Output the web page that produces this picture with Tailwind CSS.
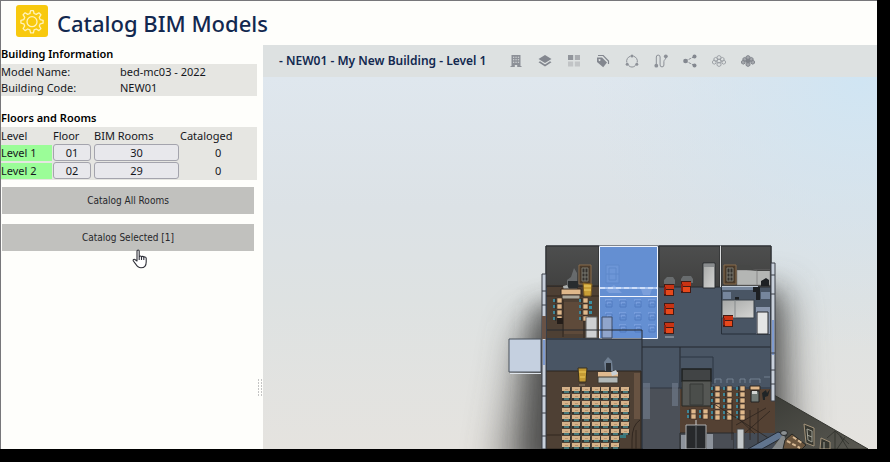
<!DOCTYPE html>
<html lang="en">
<head>
<meta charset="utf-8">
<title>Catalog BIM Models</title>
<script src="https://cdn.jsdelivr.net/npm/@tailwindcss/browser@4"></script>
</head>
<body class="flex h-screen bg-black pr-[13px] pb-[13px] font-['Noto_Sans',sans-serif] text-[11px] text-[#15171c]">
<div class="relative flex min-w-0 flex-1 flex-col overflow-hidden border-t border-l border-[#77777a] bg-[#fefefb]">
  <header class="flex h-11 shrink-0 items-center gap-[9px] pb-1 pl-[15px]">
    <svg class="size-8" viewBox="0 0 32 32" fill="none" stroke="#fff3bd" stroke-width="1.3" stroke-linejoin="round" aria-hidden="true">
      <rect width="32" height="32" rx="3" fill="#f8c90e" stroke="none"/>
      <path d="M13.9 8.500 14.600 5.600h2.800l.7 2.900 2.200.9 2.600-1.600 2 2-1.600 2.600.9 2.200 2.900.7v2.800l-2.900.7-.9 2.200 1.600 2.600-2 2-2.600-1.600-2.200.9-.7 2.900h-2.800l-.7-2.900-2.200-.9-2.600 1.600-2-2 1.600-2.600-.9-2.200-2.900-.7v-2.800l2.900-.7.9-2.200-1.600-2.600 2-2 2.600 1.600z"/>
      <circle cx="16" cy="16.700" r="5"/>
    </svg>
    <h1 class="pt-1 text-[22px] leading-8 font-medium text-[#12284f]">Catalog BIM Models</h1>
  </header>

  <div class="flex min-h-0 flex-1">
    <aside class="flex w-[256px] shrink-0 flex-col">
      <h2 class="mb-px h-[18px] leading-[18px] font-semibold text-black">Building Information</h2>
      <dl class="grid grid-cols-[119px_1fr] bg-[#e6e6e2] leading-4">
        <dt>Model Name:</dt><dd>bed-mc03 - 2022</dd>
        <dt>Building Code:</dt><dd>NEW01</dd>
      </dl>
      <h2 class="mt-[13px] h-[18px] leading-[18px] font-semibold text-black">Floors and Rooms</h2>
      <table class="w-full table-fixed border-collapse bg-[#e6e6e2] text-left">
        <colgroup><col class="w-[51px]"><col class="w-[41px]"><col class="w-[87px]"><col></colgroup>
        <thead><tr class="h-[17px] leading-[17px]">
          <th class="p-0 font-normal">Level</th><th class="p-0 pl-px font-normal">Floor</th><th class="p-0 pl-px font-normal">BIM Rooms</th><th class="p-0 font-normal">Cataloged</th>
        </tr></thead>
        <tbody>
          <tr class="h-[18px] leading-4"><td class="p-0 pb-px"><div class="bg-[#9bfd98]">Level 1</div></td>
            <td class="p-0 pb-px pl-px"><button class="block h-[17px] w-[38px] rounded-[3px] border border-[#a4a4ad] bg-[#e8e8ec] leading-[15px]">01</button></td>
            <td class="p-0 pb-px pl-px"><button class="block h-[17px] w-[85px] rounded-[3px] border border-[#a4a4ad] bg-[#e8e8ec] leading-[15px]">30</button></td>
            <td class="p-0 pl-[35px]">0</td></tr>
          <tr class="h-[18px] leading-4"><td class="p-0 pb-px"><div class="bg-[#9bfd98]">Level 2</div></td>
            <td class="p-0 pb-px pl-px"><button class="block h-[17px] w-[38px] rounded-[3px] border border-[#a4a4ad] bg-[#e8e8ec] leading-[15px]">02</button></td>
            <td class="p-0 pb-px pl-px"><button class="block h-[17px] w-[85px] rounded-[3px] border border-[#a4a4ad] bg-[#e8e8ec] leading-[15px]">29</button></td>
            <td class="p-0 pl-[35px]">0</td></tr>
        </tbody>
      </table>
      <div class="mt-[7px] flex flex-col gap-[10px] pr-[3px] pl-px font-['DejaVu_Sans_Condensed','DejaVu_Sans',sans-serif] text-[10px] text-[#26262a]">
        <button class="h-[27px] bg-[#c1c1be]">Catalog All Rooms</button>
        <button class="h-[27px] bg-[#c1c1be]">Catalog Selected [1]</button>
      </div>
    </aside>

    <div class="flex w-[6px] shrink-0 flex-col items-center gap-px pt-[334px]" aria-hidden="true">
      <i class="h-[2px] w-1 border-x border-[#c4c4c4]"></i><i class="h-[2px] w-1 border-x border-[#c4c4c4]"></i><i class="h-[2px] w-1 border-x border-[#c4c4c4]"></i><i class="h-[2px] w-1 border-x border-[#c4c4c4]"></i><i class="h-[2px] w-1 border-x border-[#c4c4c4]"></i><i class="h-[2px] w-1 border-x border-[#c4c4c4]"></i>
    </div>

    <main class="flex min-w-0 flex-1 flex-col">
      <div class="flex h-8 shrink-0 items-center bg-[#dde1e1] pl-4">
        <h2 class="w-[222px] text-[12px] font-semibold whitespace-nowrap text-[#12284f]">- NEW01 - My New Building - Level 1</h2>
        <nav class="flex text-[#8c9097]" aria-label="Viewer tools">
          <button class="flex w-[29px] justify-center" aria-label="Building"><svg class="size-[14px]" viewBox="0 0 14 14"><path fill="currentColor" fill-rule="evenodd" d="M2.500 1h9v11h1v1H8.200v-2H5.800v2H1.500v-1h1zM4 2.700v1h1.300v-1zm2.400 0v1h1.300v-1zm2.400 0v1h1.300v-1zM4 5.200v1h1.300v-1zm2.400 0v1h1.300v-1zm2.400 0v1h1.300v-1zM4 7.700v1h1.300v-1zm2.400 0v1h1.300v-1zm2.400 0v1h1.300v-1z"/></svg></button>
          <button class="flex w-[29px] justify-center" aria-label="Layers"><svg class="size-[14px]" viewBox="0 0 14 14"><path fill="#83878f" d="M7 1 13.500 5 7 9 .5 5zM.5 8.200 2 7.300l5 3.100 5-3.100 1.500.9L7 12.500z"/></svg></button>
          <button class="flex w-[29px] justify-center" aria-label="Grid"><svg class="size-[14px]" viewBox="0 0 14 14"><path fill="#91959b" d="M1 1h5.200v5H1z"/><path fill="#a9acb0" d="M7.800 1H13v5H7.800z"/><path fill="#c1c4c6" d="M1 7.500h5.200v5H1zM7.800 7.500H13v5H7.800z"/></svg></button>
          <button class="flex w-[29px] justify-center" aria-label="Tags"><svg class="size-[14px]" viewBox="0 0 14 14"><path fill="#83878f" fill-rule="evenodd" d="M1 3.500h5l5 5L7.200 13.300 1 8zM3.500 5a1 1 0 1 0 .1 0z"/><path d="M2 1.500h5.200L12.500 7v3" fill="none" stroke="#83878f" stroke-width="1.200"/></svg></button>
          <button class="flex w-[29px] justify-center" aria-label="Cycle"><svg class="size-[14px]" viewBox="0 0 14 14" fill="none" stroke="currentColor"><path d="M5.500 2.200A5.200 5.200 0 0 0 1.800 8.500M3.500 11.500a5.200 5.200 0 0 0 7 0M12.200 8.500A5.200 5.200 0 0 0 8.500 2.200"/><g fill="currentColor" stroke="none"><circle cx="7" cy="1.900" r="1.500"/><circle cx="2.200" cy="10.300" r="1.500"/><circle cx="11.800" cy="10.300" r="1.500"/></g></svg></button>
          <button class="flex w-[29px] justify-center" aria-label="Route"><svg class="size-[14px]" viewBox="0 0 14 14" fill="none" stroke="currentColor"><path d="M2.300 10.500V3a1.900 1.900 0 0 1 3.800 0v8a1.900 1.900 0 0 0 3.800 0V7.500c0-1.700 1.900-1.700 1.900-4"/><circle cx="2.300" cy="11.700" r="1.900" fill="currentColor" stroke="none"/><circle cx="11.800" cy="2.300" r="1.900" fill="currentColor" stroke="none"/></svg></button>
          <button class="flex w-[29px] justify-center" aria-label="Share"><svg class="size-[14px]" viewBox="0 0 14 14" fill="none" stroke="currentColor"><path d="M2.500 7 12 2.300M2.500 7l9.500 4.700" stroke-dasharray="2.500 1"/><g fill="#83878f" stroke="none"><circle cx="2.500" cy="7" r="2.300"/><circle cx="11.500" cy="2.500" r="2"/><circle cx="11.500" cy="11.500" r="2"/></g></svg></button>
          <button class="flex w-[29px] justify-center" aria-label="Cluster outline"><svg class="size-[14px]" viewBox="0 0 14 14" fill="none" stroke="#999da3" stroke-width=".9"><path d="m7 1.500 2 1.100v2L7 5.700 5 4.600v-2zM7 4.900 9 6v2L7 9.100 5 8V6zM7 8.300l2 1.100v2l-2 1.100-2-1.100v-2zM3.700 3.400l1.800 1v2l-1.800 1-1.800-1v-2zM10.300 3.400l1.800 1v2l-1.800 1-1.800-1v-2zM2.300 6.200l1.800 1v2l-1.800 1-1.800-1v-2zM11.700 6.200l1.800 1v2l-1.800 1-1.800-1v-2z"/></svg></button>
          <button class="flex w-[29px] justify-center" aria-label="Cluster filled"><svg class="size-[14px]" viewBox="0 0 14 14" fill="#a4a7ac" stroke="#80848b" stroke-width=".9"><path d="m7 1.500 2 1.100v2L7 5.700 5 4.600v-2zM3.700 3.400l1.800 1v2l-1.800 1-1.800-1v-2zM10.300 3.400l1.800 1v2l-1.800 1-1.800-1v-2zM2.300 6.200l1.800 1v2l-1.800 1-1.800-1v-2zM11.700 6.200l1.800 1v2l-1.800 1-1.800-1v-2zM7 8.300l2 1.100v2l-2 1.100-2-1.100v-2z"/><path fill="#80848b" d="M7 4.900 9 6v2L7 9.100 5 8V6z"/></svg></button>
        </nav>
      </div>

      <svg class="min-h-0 w-full flex-1" viewBox="263 77 614 372" preserveAspectRatio="xMidYMid slice" role="img" aria-label="3D floor plan of Level 1">
        <defs>
          <linearGradient id="sky" x1="0" y1="0" x2="0" y2="1"><stop offset="0" stop-color="#dfe7ee"/><stop offset=".35" stop-color="#dce2e6"/><stop offset=".6" stop-color="#dee2e2"/><stop offset="1" stop-color="#e5e3df"/></linearGradient>
          <radialGradient id="glow" gradientUnits="userSpaceOnUse" cx="860" cy="80" r="270"><stop offset="0" stop-color="#d0e5f3"/><stop offset="1" stop-color="#d5e2ec" stop-opacity="0"/></radialGradient>
          <linearGradient id="dark" x1="0" y1="0" x2="0" y2="1"><stop offset="0" stop-color="#4d4e4e"/><stop offset="1" stop-color="#414140"/></linearGradient>
          <linearGradient id="metal" x1="0" y1="0" x2="1" y2="1"><stop offset="0" stop-color="#a5a7a6"/><stop offset="1" stop-color="#d5d5d3"/></linearGradient>
          <linearGradient id="ground" x1="0" y1="0" x2="1" y2="1"><stop offset="0" stop-color="#3c3d38"/><stop offset="1" stop-color="#5a5952"/></linearGradient>
          <filter id="soft" x="-60%" y="-60%" width="220%" height="220%"><feGaussianBlur stdDeviation="19"/></filter>
          <filter id="near" x="-60%" y="-60%" width="220%" height="220%"><feGaussianBlur stdDeviation="12"/></filter>
          <g id="desk"><path fill="#33342f" d="M0 1h9v5H0z"/><path fill="#d5b28a" d="M0 0h8v4H0z"/><path fill="#47787a" d="M2 4h5v2H2z"/><path fill="#b9956d" d="M3 2h3v1H3z"/></g>
          <g id="deskrow"><use href="#desk"/><use href="#desk" x="10"/><use href="#desk" x="20"/><use href="#desk" x="30"/><use href="#desk" x="39"/><use href="#desk" x="49"/></g>
          <g id="side"><path fill="#dfb88b" stroke="#3a2e25" stroke-width=".6" d="M0 0h5v5H0z"/><path fill="#3f8596" d="M-4 1h2v3h-2z"/><path stroke="#1f2b2f" stroke-width=".7" d="M-1.500 0v5"/></g>
          <g id="red"><path fill="#431b15" d="M0 0h10v12H0z"/><path fill="#c93313" d="M1 1h9v4H1z"/><path fill="#e6481b" d="M2 6h7v5H2z"/><path fill="#8f1f10" d="M0 3h2v7H0z"/></g>
          <g id="seat" fill="none" stroke="#507abf"><path fill="#779ddd" stroke="none" d="M0 0h7v5H0z"/><path d="M1 2h6v6H1zM3 5h3"/></g>
          <g id="cabinet"><path fill="#493a2b" stroke="#8a6c4c" d="M0 0h12v19H0z"/><path stroke="#85857c" fill="#34312d" stroke-width=".8" d="M3 3h6v13H3z"/><path stroke="#85857c" stroke-width=".8" d="M3 8h6M3 12h6M6 3v13"/></g>
        </defs>
        <path fill="url(#sky)" d="M263 77h614v372H263z"/>
        <path fill="url(#glow)" d="M263 77h614v372H263z"/>
        <path fill="#4d4d4b" opacity=".65" filter="url(#soft)" d="M522 322 788 290 798 480H496z"/>
        <path fill="#333" opacity=".6" filter="url(#near)" d="M534 305 776 290 780 470H524z"/>

        <path fill="url(#ground)" stroke="#34352f" d="M774 395 868 449H774z"/>
        <path fill="#495564" stroke="#222932" d="M546 246h225v203H546z"/>
        <g stroke="#292b2d"><path fill="url(#dark)" d="M546 246h53v41h-53zM659 246h61v41h-61zM721 246h50v41h-50z"/></g>

        <!-- west classroom -->
        <path fill="#4e4034" d="M547 287h52v51h-52z"/><path fill="#5e4a3a" d="M564 302h19v32h-19z"/>
        <path stroke="#30261f" fill="none" d="M546 286h53M546 296h53M563 300v37M584 300v38"/>
        <use href="#cabinet" x="579" y="265"/>
        <path fill="#707477" opacity=".8" d="m567 280 4-3 3-9 3 5v16h-10z"/>
        <path fill="#282c2e" d="M568 281h10v7h-10z"/><path fill="#aeb2b1" d="m563 286 4-1 3 6h-6z"/>
        <path fill="#dfb88b" stroke="#32271e" d="M561 289h20v6h-20z"/><path fill="#aca89c" stroke="#43372d" d="M562 295h18v4h-18z"/>
        <path fill="#c89e36" stroke="#7b5a20" d="m583 283 9 1-1 12h-7z"/><path stroke="#eed069" d="M584 286h7M584 290h7"/>
        <g><use href="#side" x="557" y="298"/><use href="#side" x="557" y="304"/><use href="#side" x="557" y="310"/><use href="#side" x="557" y="316"/></g>
        <g transform="translate(1145)"><use href="#side" x="-562" y="298"/><use href="#side" x="-562" y="304"/><use href="#side" x="-562" y="310"/><use href="#side" x="-562" y="316"/></g>
        <path fill="#3a8fa3" d="M589 301h3v3h-3zm0 5h3v3h-3zm0 5h3v3h-3z"/><path fill="#241d19" d="M557 318h6v6h-6z"/>

        <!-- selected room -->
        <path fill="#648fd2" stroke="#eef3fc" d="M599.500 246.500h58v92h-58z"/>
        <path fill="#6d96d7" stroke="#5f88ca" d="M606 265h13v18h-13zM609 268h7v12h-7zM606 274h13"/>
        <path fill="#7b9fdb" d="m606 290 8-5 8 8h-13zM641 289h11l-2 6h-7z"/>
        <path stroke="#a9c5f2" stroke-width="2" d="M600 288h57"/><path stroke="#f4f7fe" d="M600 296.500h57"/><path stroke="#f4f7fe" stroke-dasharray="5 3" d="M600 288h57"/>
        <g id="seats"><use href="#seat" x="605" y="299"/><use href="#seat" x="619" y="299"/><use href="#seat" x="634" y="299"/><use href="#seat" x="648" y="299"/></g>
        <use href="#seats" y="13"/><use href="#seats" y="25"/>

        <!-- east rooms -->
        <path fill="url(#metal)" stroke="#292d31" d="M703 263h12v25h-12z"/><path fill="#898c8e" d="M704 264h10v3h-10z"/>
        <path fill="#777d80" opacity=".7" d="m664 280 3-3h6l2 3v4h-11zM681 279l2-3h8l2 3v4h-12z"/>
        <use href="#red" x="664" y="284"/><use href="#red" x="681" y="281"/><use href="#red" x="664" y="303"/><use href="#red" x="664" y="322"/>
        <path stroke="#aeb6bf" d="M665 337h9"/>
        <path stroke="#dadcdd" d="M720.500 246v41"/>
        <path fill="none" stroke="#272f39" d="M721.500 288v46h49"/>
        <path fill="#b4b6b4" stroke="#787a79" stroke-width=".6" d="M737 270h33v15h-33z"/><path fill="#464746" d="M737 265h12q3 6 9 5h12v1h-13q-7-1-11-1h-9z"/><path stroke="#888" d="M757 271v14"/>
        <use href="#cabinet" x="724" y="265"/>
        <path fill="#76869c" d="M722 286h36v4h-36zM723 292h8v7h-8zM761 292h9v7h-9z"/><path stroke="#bfc9d5" d="M722 286.500h36"/>
        <path fill="#1d2023" d="m761 281 5-3 3 2v6h-8zM753 287h7v5h-7zM756 292h4v8h-4zM735 297h4v3h-4z"/>
        <path fill="url(#metal)" stroke="#3b424b" d="M722 300h32v18h-32z"/><path stroke="#85898b" d="M735 300v18"/>
        <path fill="#8996ac" d="M756 307h14v27h-14z"/><path fill="#e4e5e5" stroke="#282b2f" d="M757 312h11v22h-11z"/>
        <use href="#red" x="723" y="315"/>

        <!-- halls and corridor -->
        <path fill="#ced0d2" stroke="#60615f" d="M586 317h11v21h-11z"/><path fill="#90a5cc" stroke="#414f68" d="M602 317h10v21h-10z"/>
        <path fill="none" stroke="#24282f" d="M547 330h95v14M546 339h96M642 347h129M642 344v105M680 347v102"/>
        <path fill="#4b5058" d="M643 388h37v61h-37z"/><path stroke="#303741" d="M643 388h37"/>

        <!-- lecture room -->
        <path fill="#4e4034" stroke="#2b241f" d="M546 371h95v78h-95z"/>
        <path fill="#685342" d="M634 373h6v46h-6z"/><path fill="#6d7788" opacity=".7" d="M643 383h7v36h-7zM672 383h6v23h-6z"/>
        <path fill="none" stroke="#30261f" d="M546 435h15M640 420q-8 5-8 20v9M636 430v19"/>
        <path fill="#c39a34" stroke="#39301f" d="m578 368 9 0-1 14h-7z"/><path stroke="#f0cd5b" d="M579 372h7M580 377h5"/><path stroke="#9b8b72" d="M579 385h6"/>
        <path fill="#7a899c" opacity=".8" d="m604 362 4-5 4 4 1 10h-8z"/><path fill="#2c3137" d="M606 363h5v9h-5z"/>
        <path fill="#dfb98e" d="M598 372h20v5h-20z"/><path fill="#b1b8b8" stroke="#3c3831" d="M598 377h20v6h-20z"/><path fill="#c9d0d4" d="m611 372 5-2 2 4-6 2z"/>
        <g><use href="#deskrow" x="562" y="387"/><use href="#deskrow" x="562" y="394"/><use href="#deskrow" x="562" y="401"/><use href="#deskrow" x="562" y="408"/><use href="#deskrow" x="562" y="415"/><use href="#deskrow" x="562" y="422"/><use href="#deskrow" x="562" y="429"/><use href="#deskrow" x="562" y="436"/><use href="#deskrow" x="562" y="443"/></g>
        <g><use href="#desk" x="621" y="387"/><use href="#desk" x="621" y="394"/><use href="#desk" x="621" y="401"/><use href="#desk" x="621" y="408"/><use href="#desk" x="621" y="415"/><use href="#desk" x="621" y="422"/><use href="#desk" x="621" y="429"/></g>
        <path fill="#37777c" d="M620 435h6v3h-6z"/>

        <!-- stairwell and study area -->
        <path fill="#544133" d="M680 389h95v44h-95z"/><path fill="#4a4e55" stroke="#292a2c" d="M680 433h54v16h-54z"/>
        <path fill="#454c56" d="M734 433h41v16h-41z"/>
        <path fill="none" stroke="#2d3742" d="M680 357h33v27M680 388h91"/>
        <path fill="#414445" stroke="#1e2021" stroke-width="1.500" d="M682 369h29v12h-29z"/><path fill="#555754" stroke="#262825" d="M682 381h29v25h-29z"/><path fill="#4b4e4b" stroke="#363836" d="M690 384h13v21h-13z"/>
        <path fill="none" stroke="#8492a4" opacity=".7" d="M715 383v-4h6v4M727 383v-4h6v4M740 383v-4h5v4M750 383v-4h10v4M764 377h6"/>
        <g id="study"><use href="#side" x="715" y="386"/><use href="#side" x="727" y="386"/><use href="#side" x="740" y="386"/></g>
        <use href="#study" y="6"/><use href="#study" y="12"/><use href="#study" y="18"/><use href="#study" y="24"/><use href="#study" y="29"/>
        <use href="#side" x="691" y="409"/><use href="#side" x="691" y="414"/><use href="#side" x="703" y="409"/><use href="#side" x="703" y="414"/>
        <path fill="#e0b88a" stroke="#31261d" d="M750 386h10v4h-10z"/><path fill="#717a76" stroke="#222" d="M751 391h8v11h-8z"/><path fill="#d1d4d2" d="M752 391h5v3h-5z"/><path fill="#202426" d="m762 393 4-3 1 3 3-4-2 7-3 1v3h-2z"/>
        <path fill="none" stroke="#2d241e" stroke-width=".8" d="m714 404 56 35M736 425l30-17M745 433l25-22M750 410v30M758 408v35M732 400v40M740 420l15 14"/>
        <path fill="#8d939b" d="M681 435h5v14h-5zM707 434h6v15h-6z"/><path fill="#27292b" stroke="#afb1b2" d="M686 425h20v24h-20z"/><path stroke="#65696c" d="M696 426v23"/><path stroke="#cacccd" d="M696 420v5"/>
        <path fill="#c4c9cb" stroke="#444" d="M737 429h7v20h-7z"/>

        <!-- exterior -->
        <path fill="#c5d0e0" stroke="#48505b" d="M509 339h32v33h-32z"/><path stroke="#dfe5ec" d="M510 373.500h31"/>
        <path fill="#c9d1dc" stroke="#3a3f46" d="M542 274h4v175h-4zM771 263h4v138h-4z"/><path fill="#7f9bd0" d="M543 340h2v25h-2zM772 320h2v35h-2z"/><path fill="#685246" d="M542 316h4v23h-4z"/><path stroke="#3a3f46" d="M542 291h4M542 305h4M542 386h4M542 396h4M542 413h4M542 436h4M771 275h4M771 294h4M771 353h4M771 370h4M771 384h4"/>
        <path fill="#61758f" stroke="#252b34" d="m748 449 30-17 9 3-25 14z"/><path fill="#85898a" d="m772 449 12-16 3 16z"/>
        <ellipse cx="784" cy="433" rx="3.500" ry="2.500" fill="#8b9092" stroke="#292a29"/>
        <path fill="#6c563e" stroke="#272824" d="m785 440 7-6 14 11-4 4h-19z"/><path stroke="#d9ba93" stroke-width="2" stroke-dasharray="4 2" d="m787 441 13 7M793 437l9 6"/>
        <g fill="#373831" stroke="#a3937a"><path d="m804 424 10 4v18l-8-3zM821 438l9 4v7h-10z"/><path fill="none" stroke="#a2a297" d="m807 429 5 2v11l-4-2zM807 435l5 2M824 442v7"/></g>
        <path fill="none" stroke="#292b27" stroke-width=".7" d="m827 438 8-7 14 13M840 436l8 13M835 432v17M845 437l-8 12"/>
      </svg>
    </main>
  </div>

  <svg class="absolute top-[248px] left-[131px] h-5 w-4" viewBox="0 0 16 20" fill="#fff" stroke="#2e2f37" stroke-width="1.100" stroke-linejoin="round" aria-hidden="true"><path d="M5 12V2.200c0-1.600 2.200-1.600 2.200 0V8c.1-1.400 2.300-1.300 2.300.2.200-1.300 2.300-1.100 2.300.3.300-1 2.400-.8 2.400.8V13c0 3.500-1.600 5.800-5.200 5.800-3 0-4.200-1.700-5.300-3.700L1.400 12c-.8-1.500.9-2.300 1.900-1.200zM7.200 8v3M9.500 8.200V11M11.800 8.500V11"/></svg>
</div>
</body>
</html>
